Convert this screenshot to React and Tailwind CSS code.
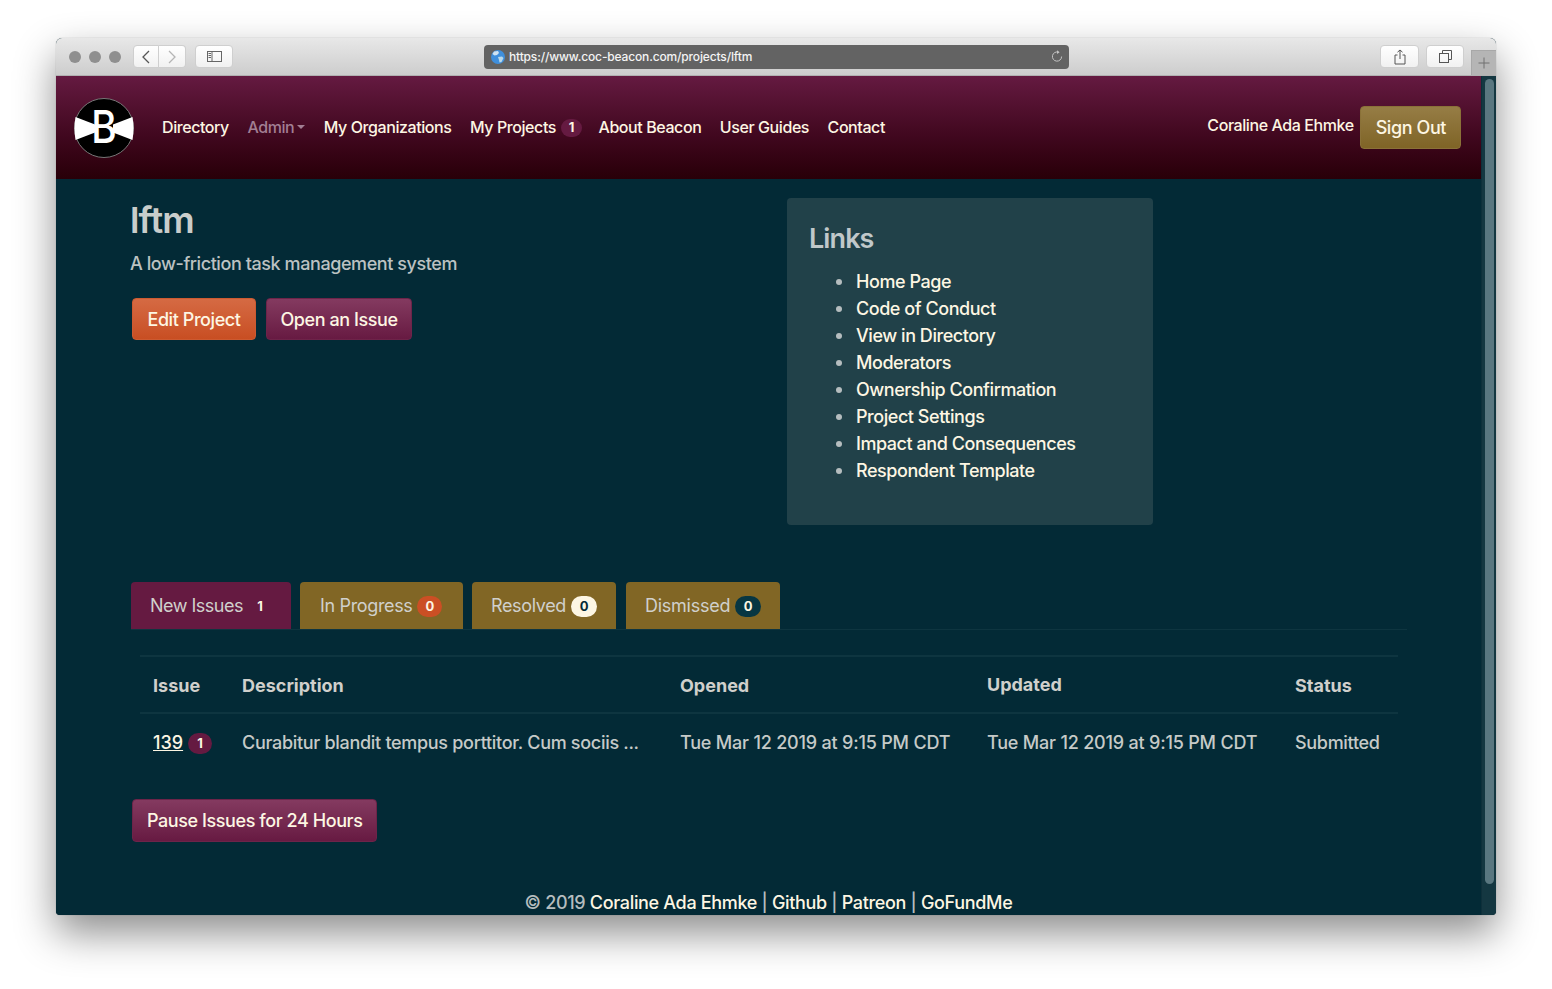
import React from "react";

const navLink = "text-[16px] leading-6 tracking-[-0.42px] whitespace-nowrap";
const chromeBtn =
  "flex items-center justify-center h-[23px] bg-gradient-to-b from-white to-[#f1f1f1] border border-[#cfcfcf] rounded-[4px]";
const linkItems = [
  "Home Page",
  "Code of Conduct",
  "View in Directory",
  "Moderators",
  "Ownership Confirmation",
  "Project Settings",
  "Impact and Consequences",
  "Respondent Template",
];

function Logo() {
  return (
    <svg width="60" height="60" viewBox="0 0 60 60" className="shrink-0">
      <circle cx="30" cy="30" r="29.5" fill="#000" stroke="#777" strokeWidth="1" />
      <path d="M1.5 19 L21 26.5 L21 34.5 L1.5 42 Q-0.5 30 1.5 19Z" fill="#fff" />
      <path d="M58.5 19 L39 26.5 L39 34.5 L58.5 42 Q60.5 30 58.5 19Z" fill="#fff" />
      <text
        transform="translate(30 45) scale(0.86 1)"
        textAnchor="middle"
        fontFamily="Inter, sans-serif"
        fontSize="45"
        fontWeight="500"
        fill="#fff"
      >
        B
      </text>
    </svg>
  );
}

function Globe() {
  return (
    <svg width="14" height="14" viewBox="0 0 14 14" className="shrink-0">
      <circle cx="7" cy="7" r="7" fill="#3f8fdc" />
      <path d="M3 1.5 L7 1 L8 3 L6 5 L3.5 5.5 L1.5 4Z" fill="#cfe3f2" />
      <path d="M7 7 L11 6.5 L12.5 8 L10.5 12 L8.5 12.5 L8 10Z" fill="#b9d8ea" />
    </svg>
  );
}

function Badge({ children, className }) {
  return (
    <span
      className={
        "inline-flex items-center justify-center rounded-full text-[13px] font-bold leading-none tracking-normal " +
        className
      }
    >
      {children}
    </span>
  );
}

function Button({ children, className }) {
  return (
    <button
      className={
        "rounded-[4px] border text-[18px] leading-none font-[450] tracking-[-0.42px] text-[#fdf6e3] whitespace-nowrap " +
        className
      }
    >
      {children}
    </button>
  );
}

const plum = "bg-gradient-to-b from-[#843a60] to-[#671a42] border-[#6d2449]";

function Tab({ children, className }) {
  return (
    <div
      className={
        "flex items-center gap-[5px] h-[47px] rounded-t-[4px] text-[18px] text-[#d0d0cc] whitespace-nowrap " +
        className
      }
    >
      {children}
    </div>
  );
}

function Toolbar() {
  return (
    <div className="relative flex items-center h-[38px] shrink-0 border-b border-[#b1b1b1] bg-gradient-to-b from-[#e8e8e8] to-[#cdcdcd]">
      <div className="flex items-center gap-[8px] ml-[13px]">
        <span className="w-3 h-3 rounded-full bg-[#8f8f8f]" />
        <span className="w-3 h-3 rounded-full bg-[#8f8f8f]" />
        <span className="w-3 h-3 rounded-full bg-[#8f8f8f]" />
      </div>
      <div className={chromeBtn + " w-[26px] ml-[12px] rounded-r-none"}>
        <svg width="10" height="14" viewBox="0 0 10 14" fill="none" stroke="#555" strokeWidth="1.3">
          <path d="M8 1 L2 7 L8 13" />
        </svg>
      </div>
      <div className={chromeBtn + " w-[27px] rounded-l-none border-l-0"}>
        <svg width="10" height="14" viewBox="0 0 10 14" fill="none" stroke="#b5b5b5" strokeWidth="1.3">
          <path d="M2 1 L8 7 L2 13" />
        </svg>
      </div>
      <div className={chromeBtn + " w-[38px] ml-[9px]"}>
        <svg width="15" height="11" viewBox="0 0 15 11" fill="none" stroke="#666" strokeWidth="1">
          <rect x="0.5" y="0.5" width="14" height="10" />
          <path d="M5 0.5 V10.5 M1.5 2.5 H4 M1.5 4.5 H4 M1.5 6.5 H4" />
        </svg>
      </div>
      <div className="flex items-center w-[585px] h-[24px] ml-[251px] pl-[7px] pr-[6px] rounded-[4px] bg-[#636363]">
        <Globe />
        <span className="ml-[4px] mt-[1px] text-[12px] tracking-[-0.15px] font-[450] text-[#f4f4f4]">
          https://www.coc-beacon.com/projects/lftm
        </span>
        <svg width="12" height="13" viewBox="0 0 12 13" fill="none" stroke="#c4c4c4" strokeWidth="1" className="ml-auto">
          <path d="M7.5 2.2 A4.6 4.6 0 1 0 10.6 6.5" />
          <path d="M6 0.3 L8.6 2.2 L6 4" fill="#c4c4c4" stroke="none" />
        </svg>
      </div>
      <div className={chromeBtn + " w-[39px] ml-auto mr-[7px]"}>
        <svg width="12" height="16" viewBox="0 0 12 16" fill="none" stroke="#555" strokeWidth="1">
          <path d="M3.5 6 H1 V15 H11 V6 H8.5 M6 10 V1 M3.5 3.2 L6 1 L8.5 3.2" />
        </svg>
      </div>
      <div className={chromeBtn + " w-[38px] mr-[32px]"}>
        <svg width="13" height="13" viewBox="0 0 13 13" fill="none" stroke="#555" strokeWidth="1">
          <rect x="0.5" y="3.5" width="9" height="9" />
          <path d="M3.5 3.5 V0.5 H12.5 V9.5 H9.5" />
        </svg>
      </div>
      <div className="absolute right-0 bottom-0 flex items-center justify-center w-[25px] h-[25px] bg-[#b5b5b5] border-l border-t border-[#a8a8a8]">
        <svg width="12" height="12" viewBox="0 0 12 12" stroke="#707070" strokeWidth="1">
          <path d="M6 0.5 V11.5 M0.5 6 H11.5" />
        </svg>
      </div>
    </div>
  );
}

function Navbar() {
  return (
    <nav className="flex items-center h-[103px] shrink-0 pl-[18px] pr-[20px] bg-gradient-to-b from-[#651a41] to-[#280008]">
      <Logo />
      <div className="flex items-center gap-[18.5px] ml-[28px] mb-[2px] font-[450] text-[#fdf6e3]">
        <a className={navLink}>Directory</a>
        <a className={navLink + " flex items-center gap-[3px] text-[#a27f93]"}>
          Admin
          <span className="w-0 h-0 border-x-[4px] border-x-transparent border-t-[4px] border-t-[#a27f93]" />
        </a>
        <a className={navLink}>My Organizations</a>
        <a className={navLink + " flex items-center gap-[5px]"}>
          My Projects
          <Badge className="w-[21px] h-[18px] -mr-[2px] text-[12px] bg-[#651a41] mt-[2px]">1</Badge>
        </a>
        <a className={navLink}>About Beacon</a>
        <a className={navLink}>User Guides</a>
        <a className={navLink}>Contact</a>
      </div>
      <span className={navLink + " ml-auto mr-[6px] mb-[6px] font-[450] text-[#fdf6e3]"}>Coraline Ada Ehmke</span>
      <Button className="h-[43px] pl-[15px] pr-[14px] bg-gradient-to-b from-[#967d45] to-[#7f6426] border-[#8a7138]">
        Sign Out
      </Button>
    </nav>
  );
}

function Table() {
  const th = "h-[57px] pl-[13px] text-left text-[18px] font-bold text-[#d0d0cc]";
  const td = "h-[57px] pl-[13px] text-[18px] font-[450] text-[#c6cac8] whitespace-nowrap";
  return (
    <table className="ml-[84px] w-[1258px] table-fixed border-collapse mt-[25px]">
      <thead>
        <tr className="border-y-2 border-[#0e3540]">
          <th className={th + " pt-[2px] w-[89px]"}>Issue</th>
          <th className={th + " pt-[2px] w-[438px]"}>Description</th>
          <th className={th + " pt-[2px] w-[307px]"}>Opened</th>
          <th className={th + " w-[307px]"}>Updated</th>
          <th className={th + " pt-[2px]"}>
            <span className="ml-px">Status</span>
          </th>
        </tr>
      </thead>
      <tbody>
        <tr>
          <td className={td}>
            <span className="flex items-center gap-[5px]">
              <a className="underline text-[#fdf6e3]">139</a>
              <Badge className="w-[24px] h-[21px] bg-[#651a41] text-[#fdf6e3] mt-[3px]">1</Badge>
            </span>
          </td>
          <td className={td + " tracking-[-0.3px]"}>Curabitur blandit tempus porttitor. Cum sociis ...</td>
          <td className={td + " tracking-[-0.2px]"}>Tue Mar 12 2019 at 9:15 PM CDT</td>
          <td className={td + " tracking-[-0.2px]"}>Tue Mar 12 2019 at 9:15 PM CDT</td>
          <td className={td + " tracking-[-0.3px]"}>
            <span className="ml-px">Submitted</span>
          </td>
        </tr>
      </tbody>
    </table>
  );
}

export default function App() {
  return (
    <div className="w-[1552px] h-[989px] bg-white pt-[38px] pl-[56px] overflow-hidden font-['Inter',sans-serif]">
      <div className="flex flex-col w-[1440px] h-[877px] rounded-t-[6px] rounded-b-[4px] overflow-hidden shadow-[0_18px_40px_rgba(0,0,0,0.45),0_0_1px_rgba(0,0,0,0.4)] bg-[#032a36]">
        <Toolbar />
        <div className="flex flex-1 min-h-0">
          <div className="flex flex-col w-[1425px]">
            <Navbar />
            <main className="flex-1 min-h-0 bg-[#032a36]">
              <div className="flex h-[403px] pt-[19px]">
                <div className="w-[731px] pl-[74px]">
                  <h1 className="text-[36px] leading-[44px] font-semibold tracking-[-0.8px] text-[#c9cdcb]">lftm</h1>
                  <p className="mt-[8px] text-[18px] leading-[27px] font-[450] tracking-[-0.42px] text-[#bcc2c2]">
                    A low-friction task management system
                  </p>
                  <div className="flex gap-[10px] ml-[2px] mt-[21px]">
                    <Button className="w-[124px] h-[42px] pt-[2px] bg-gradient-to-b from-[#d56a43] to-[#c84e22] border-[#cc5a31]">
                      Edit Project
                    </Button>
                    <Button className={"w-[146px] h-[42px] pt-[2px] " + plum}>Open an Issue</Button>
                  </div>
                </div>
                <section className="w-[366px] h-[327px] px-[22px] pt-[23px] rounded-[4px] bg-[#214149]">
                  <h2 className="text-[27px] leading-[36px] font-semibold tracking-[-0.9px] text-[#c0c8ca]">Links</h2>
                  <ul className="mt-[11px] pl-[27px] text-[18px] leading-[27px] font-[450] tracking-[-0.45px] text-[#fdf6e3]">
                    {linkItems.map((item) => (
                      <li key={item} className="flex items-center gap-[14px]">
                        <span className="w-[6px] h-[6px] rounded-full bg-[#b5bdbf]" />
                        {item}
                      </li>
                    ))}
                  </ul>
                </section>
              </div>
              <div className="flex ml-[75px] mr-[74px] border-b border-[#0e3540]">
                <Tab className="w-[160px] pl-[19px] tracking-[-0.5px] bg-[#651a41]">
                  New Issues
                  <Badge className="w-[24px] h-[21px] text-[#fdf6e3] mt-[2px]">1</Badge>
                </Tab>
                <Tab className="w-[163px] ml-[9px] pl-[20px] tracking-[-0.35px] bg-[#816625]">
                  In Progress
                  <Badge className="w-[25px] h-[21px] bg-[#cb4f24] text-[#fdf6e3] mt-[2px]">0</Badge>
                </Tab>
                <Tab className="w-[144px] ml-[9px] pl-[19px] tracking-[-0.35px] bg-[#816625]">
                  Resolved
                  <Badge className="w-[26px] h-[21px] bg-[#fdf6e3] text-[#032a36] mt-[2px]">0</Badge>
                </Tab>
                <Tab className="w-[154px] ml-[10px] pl-[19px] tracking-[-0.25px] bg-[#816625]">
                  Dismissed
                  <Badge className="w-[26px] h-[21px] bg-[#073642] text-[#fdf6e3] mt-[2px]">0</Badge>
                </Tab>
              </div>
              <Table />
              <div className="ml-[76px] mt-[29px]">
                <Button className={"h-[43px] px-[14px] " + plum}>Pause Issues for 24 Hours</Button>
              </div>
              <footer className="mt-[49px] text-center text-[18px] leading-[24px] font-[450] tracking-[-0.33px] text-[#b5bdbf]">
                © 2019 <a className="text-[#fdf6e3]">Coraline Ada Ehmke</a> |{" "}
                <a className="text-[#fdf6e3]">Github</a> | <a className="text-[#fdf6e3]">Patreon</a> |{" "}
                <a className="text-[#fdf6e3]">GoFundMe</a>
              </footer>
            </main>
          </div>
          <div className="w-[15px] shrink-0 pt-[3px] pl-[3px] bg-[#143741] border-l border-[#0e2f3a]">
            <div className="w-[9px] h-[805px] rounded-full bg-[#5a7780]" />
          </div>
        </div>
      </div>
    </div>
  );
}
